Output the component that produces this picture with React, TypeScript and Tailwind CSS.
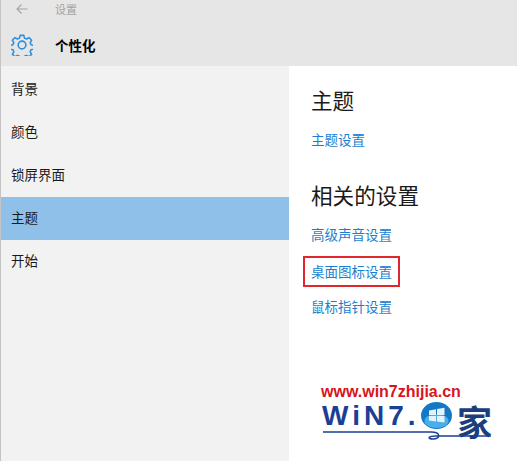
import React from 'react';

const cjk = { fontFamily: '"Noto Sans CJK SC", sans-serif' };
const latin = { fontFamily: '"Liberation Sans", sans-serif' };

const navItems = ['背景', '颜色', '锁屏界面', '主题', '开始'];

const GearIcon = () => (
  <svg width="22" height="22" viewBox="0 0 24 24" fill="none" stroke="#2f8fdc" strokeWidth="1.700" strokeLinejoin="round">
    <path d="M10 1.500h4l.7 3 2.300 1 2.700-1.600 2.800 2.900-1.600 2.600 1 2.300 2.900.7v4l-2.900.7-1 2.300 1.600 2.700-2.800 2.800-2.700-1.600-2.300 1-.7 2.900h-4l-.7-2.900-2.300-1-2.700 1.600-2.800-2.800 1.600-2.700-1-2.300-2.900-.7v-4l2.900-.7 1-2.300-1.600-2.600 2.800-2.900 2.700 1.600 2.300-1z" />
    <circle cx="12" cy="12" r="4.200" />
  </svg>
);

const WinOrb = () => (
  <svg width="31" height="27" viewBox="0 0 31 27">
    <ellipse cx="15.500" cy="13.500" rx="15.500" ry="13.500" fill="#1478c8" />
    <ellipse cx="15.500" cy="19" rx="12" ry="7" fill="#4aaeea" />
    <path d="M8 8.500l7-1.300v5.800H8zM16 7l7.500-1.300V13H16zM8 14h7v5.500l-7-1zM16 14h7.500v6.500L16 19.500z" fill="#e4f2fb" />
  </svg>
);

const Logo = () => (
  <div className="absolute left-[320px] top-[384px] w-[175px] h-[76px]">
    <div className="text-[#d8141c] font-bold text-[16px] leading-[16px] whitespace-nowrap" style={latin}>
      www.win7zhijia.cn
    </div>
    <div className="flex items-start h-[27px] mt-[2px] ml-[1px]">
      <span className="text-[#1b3f94] font-bold text-[28px] leading-[27px] tracking-[4px] whitespace-nowrap" style={latin}>
        WiN7.
      </span>
      <span className="ml-[1px]"><WinOrb /></span>
    </div>
    <span className="absolute left-[136px] top-[18px] text-[#1b3f7c] font-bold text-[35px] leading-[38px]" style={cjk}>家</span>
    <svg className="absolute left-0 top-[45px]" width="175" height="14" viewBox="0 0 175 14" fill="none" stroke="#1b3f94">
      <path d="M2 3h108c10 0 10 7 2 7-6 0-5-3 3-3h55" strokeWidth="1.500" />
    </svg>
  </div>
);

export default function App() {
  return (
    <div className="relative w-[517px] h-[461px] bg-white overflow-hidden border-l border-[#c4c4c4]" style={cjk}>
      <header className="h-[66px] bg-[#e6e6e6]">
        <div className="flex items-center h-[18px] pl-[15px]">
          <svg width="12" height="12" viewBox="0 0 12 12" fill="none" stroke="#a3a3a3" strokeWidth="1.100">
            <path d="M11.500 6H1M5.500 1.500L1 6l4.500 4.500" />
          </svg>
          <span className="ml-[27px] text-[11px] leading-[18px] text-[#a3a3a3]">设置</span>
        </div>
        <div className="flex items-center h-[24px] mt-[15px] pl-[10px]">
          <GearIcon />
          <span className="ml-[22px] text-[13.500px] font-bold text-black">个性化</span>
        </div>
      </header>
      <div className="flex h-[395px]">
        <nav className="w-[288px] bg-[#f2f2f2] pt-[2px]">
          {navItems.map(item => (
            <div
              key={item}
              className={`h-[43px] flex items-center pl-[10px] pb-[2px] text-[13.500px] text-[#1a1a1a] ${item === '主题' ? 'bg-[#8fc0e9]' : ''}`}
            >
              {item}
            </div>
          ))}
        </nav>
        <main className="flex-1 pl-[22px] pt-[18px]">
          <h2 className="text-[21.600px] leading-[32px] text-[#1a1a1a]">主题</h2>
          <a className="block mt-[13px] text-[13.500px] leading-[20px] text-[#1a7fd0]">主题设置</a>
          <h2 className="mt-[30px] text-[21.600px] leading-[32px] text-[#1a1a1a]">相关的设置</h2>
          <a className="block mt-[13px] text-[13.500px] leading-[20px] text-[#1a7fd0]">高级声音设置</a>
          <a className="block mt-[12px] w-fit -ml-[8px] px-[6px] border-2 border-[#e0272d] text-[13.500px] leading-[27px] text-[#1a7fd0]">桌面图标设置</a>
          <a className="block mt-[9px] text-[13.500px] leading-[20px] text-[#1a7fd0]">鼠标指针设置</a>
        </main>
      </div>
      <Logo />
    </div>
  );
}
